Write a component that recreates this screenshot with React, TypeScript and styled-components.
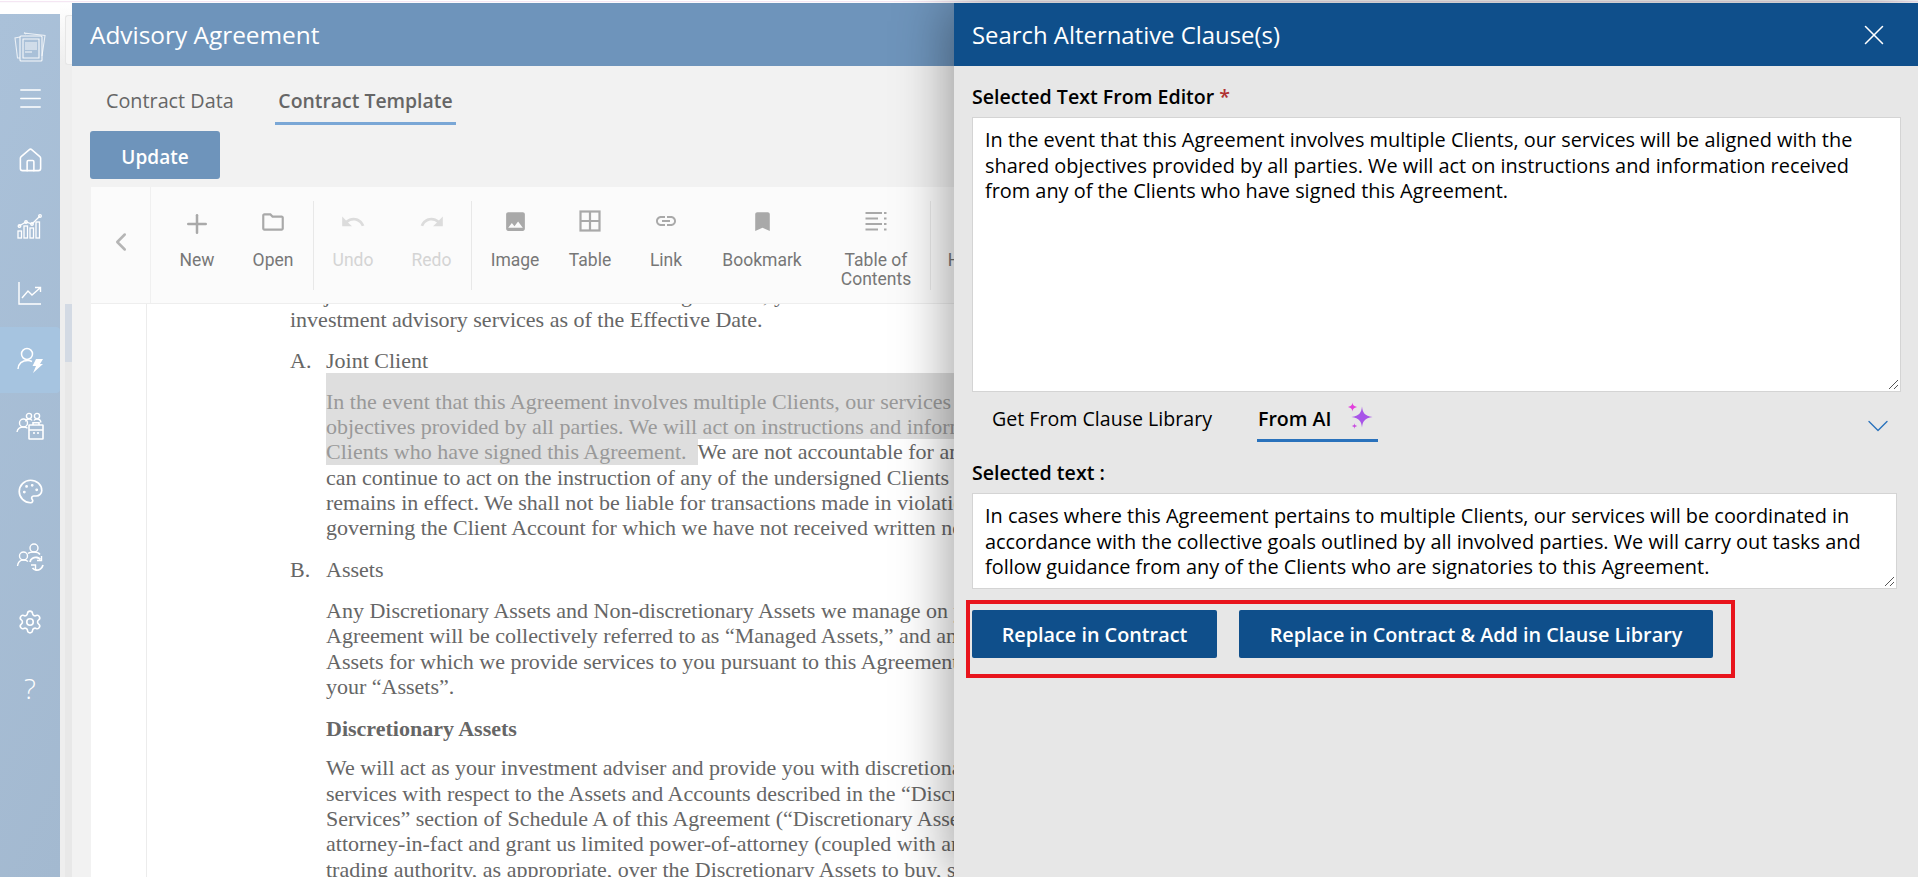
import React from 'react';
import styled, { createGlobalStyle } from 'styled-components';
import { X, ChevronDown, ChevronLeft, Plus, Home, Settings, Palette, Menu } from 'lucide-react';

const GlobalStyle = createGlobalStyle`
  html, body {
    margin: 0;
    padding: 0;
    height: 100%;
    overflow: hidden;
    background: #fff;
    font-family: 'Open Sans', sans-serif;
  }
  * { box-sizing: border-box; }
`;

const Page = styled.div`
  width: 1918px;
  height: 877px;
  display: flex;
  flex-direction: column;
  overflow: hidden;
`;

const TopStrip = styled.div`
  height: 3px;
  flex: none;
  background: linear-gradient(#fff 0 1px, #f5e6f3 1px 2px, #fbfafc 2px);
`;

const Shell = styled.div`
  flex: 1;
  display: flex;
  min-height: 0;
`;

const Rail = styled.nav`
  width: 60px;
  flex: none;
  margin-top: 11px;
  display: flex;
  flex-direction: column;
  align-items: stretch;
  background: linear-gradient(115deg, #aac1d9 0%, #a3b9d0 100%);
  color: #fff;
`;

const RailLogo = styled.div`
  height: 38px;
  margin-top: 17px;
  display: flex;
  justify-content: center;
`;

const RailItem = styled.div<{ $active?: boolean; $h?: number }>`
  height: ${(p) => p.$h ?? 65.5}px;
  display: flex;
  align-items: center;
  justify-content: center;
  border-radius: 0 4px 4px 0;
  background: ${(p) => (p.$active ? '#a6c4e0' : 'transparent')};
  svg { display: block; }
`;

const RailQuestion = styled.span`
  font-size: 28px;
  line-height: 1;
  font-weight: 300;
`;

const Gutter = styled.div`
  width: 12px;
  flex: none;
  padding-top: 12px;
  padding-left: 5px;
  background: linear-gradient(#ffffff 0, #eeeeee 60px);
`;

const GutterCard = styled.div`
  width: 7px;
  height: 50px;
  border: 1px solid #e6e6e6;
  border-right: none;
  border-radius: 3px 0 0 3px;
  background: #f6f6f6;
`;

const GutterThumb = styled.div`
  width: 7px;
  height: 58px;
  margin-top: 239px;
  background: #d3dae4;
`;

const GutterTrack = styled.div`
  width: 7px;
  height: 520px;
  background: #e8e8e8;
`;

const Main = styled.main`
  width: 882px;
  flex: none;
  display: flex;
  flex-direction: column;
  overflow: hidden;
  background: #f2f2f2;
`;

const MainHeader = styled.header`
  height: 63px;
  flex: none;
  display: flex;
  align-items: center;
  padding-left: 18px;
  background: #6e94bb;
  color: #fff;
  font-size: 24.4px;
`;

const Tabs = styled.div`
  height: 60px;
  flex: none;
  display: flex;
  padding-left: 34px;
  gap: 42px;
`;

const Tab = styled.div<{ $active?: boolean }>`
  height: 59px;
  padding: 21px 0 0;
  width: ${(p) => (p.$active ? '181px' : '127px')};
  text-align: center;
  white-space: nowrap;
  font-size: ${(p) => (p.$active ? '19.4px' : '19.8px')};
  line-height: 27px;
  color: #666;
  font-weight: ${(p) => (p.$active ? 600 : 400)};
  border-bottom: 3px solid ${(p) => (p.$active ? '#7aa7d6' : 'transparent')};
`;

const UpdateRow = styled.div`
  height: 61px;
  flex: none;
  padding: 5px 0 0 18px;
`;

const UpdateButton = styled.button`
  width: 130px;
  height: 48px;
  padding: 3px 0 0;
  border: none;
  border-radius: 3px;
  background: #6e94bb;
  color: #fff;
  font: 600 19px 'Open Sans', sans-serif;
`;

const Editor = styled.div`
  flex: 1;
  min-height: 0;
  margin-left: 19px;
  display: flex;
  flex-direction: column;
  background: #fff;
`;

const Toolbar = styled.div`
  height: 117px;
  flex: none;
  display: flex;
  background: #fbfbfb;
  border-bottom: 1px solid #eeeeee;
  overflow: hidden;
`;

const ToolbarPrev = styled.div`
  width: 60px;
  flex: none;
  display: flex;
  align-items: center;
  justify-content: center;
  padding-bottom: 6px;
  border-right: 1px solid #f0f0f0;
  color: #b5b5b5;
`;

const ToolGroup = styled.div<{ $pad?: number }>`
  display: flex;
  flex: none;
  margin: 14px 0 13px;
  padding-left: ${(p) => p.$pad ?? 0}px;
  border-right: 1px solid #e8e8e8;
`;

const Tool = styled.div<{ $w: number; $off?: boolean }>`
  width: ${(p) => p.$w}px;
  display: flex;
  flex-direction: column;
  align-items: center;
  text-align: center;
  font: 400 17.5px/19px Roboto, sans-serif;
  color: ${(p) => (p.$off ? '#d4d4d4' : '#777')};
`;

const ToolIcon = styled.div<{ $off?: boolean }>`
  height: 50px;
  padding-top: 8px;
  color: ${(p) => (p.$off ? '#dcdcdc' : '#a9a9a9')};
  svg { display: block; }
`;

const Doc = styled.div`
  flex: 1;
  min-height: 0;
  overflow: hidden;
  margin-left: 55px;
  border-left: 1px solid #ececec;
  padding-left: 143px;
  font: 400 22px/25.3px 'Liberation Serif', serif;
  color: #666;
`;

const DocLine = styled.div`
  white-space: nowrap;
`;

const ScrolledLine = styled(DocLine)`
  margin-top: -22px;
`;

const ListHead = styled(DocLine)<{ $gap: number }>`
  display: flex;
  margin-top: ${(p) => p.$gap}px;
`;

const ListMark = styled.span`
  width: 36px;
  flex: none;
`;

const Body = styled.div<{ $gap: number }>`
  margin-left: 36px;
  margin-top: ${(p) => p.$gap}px;
`;

const Marked = styled.span`
  display: inline-block;
  background: #dedede;
  color: #999;
`;

const MarkedFull = styled(DocLine)<{ $top?: number }>`
  background: #dedede;
  color: #999;
  padding-top: ${(p) => p.$top ?? 0}px;
  margin-top: ${(p) => -(p.$top ?? 0)}px;
`;

const Strong = styled(DocLine)`
  font-weight: 700;
`;

const Panel = styled.aside`
  flex: 1;
  position: relative;
  z-index: 2;
  display: flex;
  flex-direction: column;
  background: #e7e7e7;
  box-shadow: -6px 0 50px rgba(0, 0, 0, 0.36);
`;

const PanelHeader = styled.header`
  height: 63px;
  flex: none;
  display: flex;
  align-items: center;
  justify-content: space-between;
  padding: 0 27px 0 18px;
  background: #0f4f8b;
  color: #fff;
  font-size: 23.9px;
`;

const PanelBody = styled.div`
  padding: 19px 17px 0 18px;
`;

const FieldLabel = styled.label<{ $top?: number }>`
  display: block;
  margin-top: ${(p) => p.$top ?? 0}px;
  color: #000;
  font-size: 19.6px;
  font-weight: 600;
  line-height: 24px;
`;

const Required = styled.span`
  color: #b03030;
`;

const TextArea = styled.div<{ $h: number; $w?: number }>`
  position: relative;
  width: ${(p) => (p.$w ? `${p.$w}px` : 'auto')};
  height: ${(p) => p.$h}px;
  margin-top: 8px;
  padding: 9px 12px;
  background: #fff;
  border: 1px solid #d4d4d4;
  color: #000;
  font-size: 19.9px;
  line-height: 25.7px;
  white-space: pre-line;
`;

const ResizeGrip = styled.svg`
  position: absolute;
  right: 1px;
  bottom: 1px;
`;

const SubTabs = styled.div`
  height: 50px;
  display: flex;
  align-items: flex-start;
`;

const SubTab = styled.div<{ $active?: boolean }>`
  height: 50px;
  display: flex;
  align-items: flex-start;
  padding: 13px 0 0 ${(p) => (p.$active ? '1px' : '20px')};
  margin-left: ${(p) => (p.$active ? '45px' : '0')};
  width: ${(p) => (p.$active ? '121px' : 'auto')};
  white-space: nowrap;
  color: #000;
  font-size: 19.6px;
  line-height: 27px;
  font-weight: ${(p) => (p.$active ? 600 : 400)};
  border-bottom: ${(p) => (p.$active ? '3px solid #2a72bc' : 'none')};
`;

const Sparkle = styled.svg`
  flex: none;
  margin: -3px 0 0 16px;
`;

const SubTabChevron = styled.div`
  margin-left: auto;
  margin-top: 16px;
  margin-right: 5px;
  color: #2a72bc;
  svg { display: block; }
`;

const ActionBox = styled.div`
  position: relative;
  display: flex;
  gap: 22px;
  margin-top: 21px;
`;

const Outline = styled.div`
  position: absolute;
  left: -6px;
  top: -10px;
  width: 769px;
  height: 78px;
  border: 4px solid #e8141c;
`;

const ActionButton = styled.button<{ $w: number }>`
  width: ${(p) => p.$w}px;
  height: 48px;
  padding: 0;
  border: none;
  border-radius: 2px;
  background: #0f4f8b;
  color: #fff;
  font: 600 19.8px 'Open Sans', sans-serif;
`;

const Grip = () => (
  <ResizeGrip width="12" height="12" viewBox="0 0 12 12" fill="none" stroke="#555" strokeWidth="1">
    <path d="M2 11 L11 2 M7 11 L11 7" />
  </ResizeGrip>
);

const LogoIcon = () => (
  <svg width="32" height="32" viewBox="0 0 32 32" fill="none" stroke="#fff" strokeWidth="1.1">
    <path d="M6 6 L1 7 L3.5 27 L6 27 M12 3 L10 2 L31 4.5 L28 25" opacity="0.75" />
    <rect x="6" y="5" width="22" height="25" rx="1" opacity="0.9" />
    <path d="M9 8 H25 V27 H9 Z" opacity="0.9" />
    <path d="M11 12h12M11 14h12M11 16h12M11 18h12M11 21h7" strokeWidth="1.4" opacity="0.6" />
  </svg>
);

const BarsIcon = () => (
  <svg width="26" height="26" viewBox="0 0 26 26" fill="none" stroke="#fff" strokeWidth="1.3">
    <path d="M2 13 L9 9 L15 11 L23 3" />
    <circle cx="2.5" cy="13" r="1.3" /><circle cx="9" cy="9" r="1.3" /><circle cx="15" cy="11" r="1.3" /><circle cx="23" cy="3" r="1.3" />
    <rect x="1" y="18" width="3.5" height="7" /><rect x="7" y="13" width="3.5" height="12" />
    <rect x="13" y="15" width="3.5" height="10" /><rect x="19" y="9" width="3.5" height="16" />
  </svg>
);

const ChartIcon = () => (
  <svg width="24" height="24" viewBox="0 0 24 24" fill="none" stroke="#fff" strokeWidth="1.4">
    <path d="M1 1 V23 H23" />
    <path d="M4 17 L10 10 L14 14 L22 7 M17 6.5 H22.5 V11" />
  </svg>
);

const UserBoltIcon = () => (
  <svg width="28" height="28" viewBox="0 0 28 28" fill="none" stroke="#fff" strokeWidth="1.5">
    <circle cx="11" cy="8" r="5.5" />
    <path d="M2 23 C2.5 17 7 14.5 12 14.5 C14 14.5 15 15 16 15.5" />
    <path d="M20 13 H27 L24 18 H27 L17 27 L20 20 H16.5 Z" fill="#fff" stroke="none" />
  </svg>
);

const TeamCaseIcon = () => (
  <svg width="28" height="28" viewBox="0 0 28 28" fill="none" stroke="#fff" strokeWidth="1.4">
    <circle cx="7.5" cy="11" r="4" /><circle cx="13" cy="4" r="2.6" /><circle cx="21" cy="4" r="2.6" />
    <path d="M1 20 C1.5 16.5 4 15 7.5 15 C9 15 10.5 15.5 11.5 16.3 M9.5 9.5 C10 8 11 7 13 7 C14.5 7 15.5 7.6 16 8.5 M18 8.5 C18.6 7.5 19.5 7 21 7 C23 7 24.5 8 25 10.5" />
    <rect x="13" y="13" width="14" height="14" rx="0.5" strokeWidth="1.6" />
    <path d="M13 18 H27 M17 13 V10.8 H23 V13 M18 20 V22 M22 20 V22" strokeWidth="1.6" />
  </svg>
);

const UserSyncIcon = () => (
  <svg width="28" height="28" viewBox="0 0 28 28" fill="none" stroke="#fff" strokeWidth="1.4">
    <circle cx="18" cy="5" r="4" /><circle cx="7.5" cy="13" r="4" />
    <path d="M1.5 23 C2 19 4 17 7.5 17 C9.5 17 11 17.6 12 18.6 M12 10.5 C13 9.5 15 9 18 9 C21 9 23 10 24 11.5" />
    <path d="M14 19 C14.5 15.5 18 14 21 14.5 C22.5 14.8 23.5 15.5 24.5 16.5 M27 22 C26 25.5 23 27.5 20 27 C18.5 26.8 17.5 26.2 16.5 25" strokeWidth="1.8" />
    <path d="M25.5 13 V17.5 H21 M15 22 H19.5 V26" strokeWidth="1.4" />
  </svg>
);

const Mi = ({ d, size = 24 }: { d: string; size?: number }) => (
  <svg width={size} height={size} viewBox="0 0 24 24" fill="currentColor"><path d={d} /></svg>
);

const FOLDER = 'M9.17 6l2 2H20v10H4V6h5.17M10 4H4c-1.1 0-1.99.9-1.99 2L2 18c0 1.1.9 2 2 2h16c1.1 0 2-.9 2-2V8c0-1.1-.9-2-2-2h-8l-2-2z';
const UNDO = 'M12.5 8c-2.65 0-5.05.99-6.9 2.6L2 7v9h9l-3.62-3.62c1.39-1.16 3.16-1.88 5.12-1.88 3.54 0 6.55 2.31 7.6 5.5l2.37-.78C21.08 11.03 17.15 8 12.5 8z';
const REDO = 'M18.4 10.6C16.55 8.99 14.15 8 11.5 8c-4.65 0-8.58 3.03-9.96 7.22L3.9 16c1.05-3.19 4.05-5.5 7.6-5.5 1.95 0 3.73.72 5.12 1.88L13 16h9V7l-3.6 3.6z';
const IMAGE = 'M21 19V5c0-1.1-.9-2-2-2H5c-1.1 0-2 .9-2 2v14c0 1.1.9 2 2 2h14c1.1 0 2-.9 2-2zM8.5 13.5l2.5 3.01L14.5 12l4.5 6H5l3.5-4.5z';
const LINK = 'M3.9 12c0-1.71 1.39-3.1 3.1-3.1h4V7H7c-2.76 0-5 2.24-5 5s2.24 5 5 5h4v-1.9H7c-1.71 0-3.1-1.39-3.1-3.1zM8 13h8v-2H8v2zm9-6h-4v1.9h4c1.71 0 3.1 1.39 3.1 3.1s-1.39 3.1-3.1 3.1h-4V17h4c2.76 0 5-2.24 5-5s-2.24-5-5-5z';
const BOOKMARK = 'M17 3H7c-1.1 0-1.99.9-1.99 2L5 21l7-3 7 3V5c0-1.1-.9-2-2-2z';

const TableIcon = () => (
  <svg width="24" height="24" viewBox="0 0 24 24" fill="none" stroke="currentColor" strokeWidth="2.2">
    <rect x="2.5" y="2.5" width="19" height="19" />
    <path d="M12 2.5 V21.5 M2.5 12 H21.5" />
  </svg>
);

const TocIcon = () => (
  <svg width="24" height="24" viewBox="0 0 24 24" fill="none" stroke="currentColor" strokeWidth="2">
    <path d="M1.5 4 H18 M1.5 9.5 H14 M1.5 15 H18 M1.5 20.5 H14 M20 4 H22.5 M20 9.5 H22.5 M20 15 H22.5 M20 20.5 H22.5" />
  </svg>
);

const SparkleIcon = () => (
  <Sparkle width="26" height="28" viewBox="0 0 26 28">
    <path d="M14 4.5 C14.8 11 16.5 13.5 24.5 15 C16.5 16.5 14.8 19 14 25.5 C13.2 19 11.5 16.5 3.5 15 C11.5 13.5 13.2 11 14 4.5 Z" fill="#a855e8" />
    <path d="M4.5 0.5 C4.8 3 5.5 4 9 5 C5.5 6 4.8 7 4.5 9.5 C4.2 7 3.5 6 0 5 C3.5 4 4.2 3 4.5 0.5 Z" fill="#e23fdc" />
    <path d="M6.5 21 C6.7 22.8 7 23.4 9.3 24 C7 24.6 6.7 25.2 6.5 27 C6.3 25.2 6 24.6 3.7 24 C6 23.4 6.3 22.8 6.5 21 Z" fill="#c84de0" />
  </Sparkle>
);

const sourceText = `In the event that this Agreement involves multiple Clients, our services will be aligned with the
shared objectives provided by all parties. We will act on instructions and information received
from any of the Clients who have signed this Agreement.`;

const aiText = `In cases where this Agreement pertains to multiple Clients, our services will be coordinated in
accordance with the collective goals outlined by all involved parties. We will carry out tasks and
follow guidance from any of the Clients who are signatories to this Agreement.`;

export default function App() {
  return (
    <Page>
      <GlobalStyle />
      <TopStrip />
      <Shell>
        <Rail>
          <RailLogo><LogoIcon /></RailLogo>
          <RailItem $h={58}><Menu size={29} strokeWidth={1.3} /></RailItem>
          <RailItem $h={66}><Home size={27} strokeWidth={1.4} /></RailItem>
          <RailItem $h={66}><BarsIcon /></RailItem>
          <RailItem $h={68}><ChartIcon /></RailItem>
          <RailItem $h={66} $active><UserBoltIcon /></RailItem>
          <RailItem><TeamCaseIcon /></RailItem>
          <RailItem><Palette size={27} strokeWidth={1.5} /></RailItem>
          <RailItem><UserSyncIcon /></RailItem>
          <RailItem><Settings size={26} strokeWidth={1.5} /></RailItem>
          <RailItem><RailQuestion>?</RailQuestion></RailItem>
        </Rail>
        <Gutter>
          <GutterCard />
          <GutterThumb />
          <GutterTrack />
        </Gutter>
        <Main>
          <MainHeader>Advisory Agreement</MainHeader>
          <Tabs>
            <Tab>Contract Data</Tab>
            <Tab $active>Contract Template</Tab>
          </Tabs>
          <UpdateRow><UpdateButton>Update</UpdateButton></UpdateRow>
          <Editor>
            <Toolbar>
              <ToolbarPrev><ChevronLeft size={30} strokeWidth={2} /></ToolbarPrev>
              <ToolGroup $pad={10}>
                <Tool $w={72}><ToolIcon><Plus size={30} strokeWidth={2} /></ToolIcon>New</Tool>
                <Tool $w={80}><ToolIcon><Mi d={FOLDER} size={26} /></ToolIcon>Open</Tool>
              </ToolGroup>
              <ToolGroup>
                <Tool $w={78} $off><ToolIcon $off><Mi d={UNDO} size={26} /></ToolIcon>Undo</Tool>
                <Tool $w={79} $off><ToolIcon $off><Mi d={REDO} size={26} /></ToolIcon>Redo</Tool>
              </ToolGroup>
              <ToolGroup $pad={8}>
                <Tool $w={70}><ToolIcon><Mi d={IMAGE} size={25} /></ToolIcon>Image</Tool>
                <Tool $w={80}><ToolIcon><TableIcon /></ToolIcon>Table</Tool>
                <Tool $w={72}><ToolIcon><Mi d={LINK} /></ToolIcon>Link</Tool>
                <Tool $w={120}><ToolIcon><Mi d={BOOKMARK} size={25} /></ToolIcon>Bookmark</Tool>
                <Tool $w={108}><ToolIcon><TocIcon /></ToolIcon>Table of Contents</Tool>
              </ToolGroup>
              <ToolGroup $pad={15}>
                <Tool $w={60}><ToolIcon />Header</Tool>
              </ToolGroup>
            </Toolbar>
            <Doc>
              <ScrolledLine>Subject to the terms and conditions of this Agreement, you retain us for</ScrolledLine>
              <DocLine>investment advisory services as of the Effective Date.</DocLine>
              <ListHead $gap={15}><ListMark>A.</ListMark>Joint Client</ListHead>
              <Body $gap={16}>
                <MarkedFull $top={16}>In the event that this Agreement involves multiple Clients, our services will be aligned with the shared</MarkedFull>
                <MarkedFull>objectives provided by all parties. We will act on instructions and information received from any of the</MarkedFull>
                <DocLine><Marked>Clients who have signed this Agreement.&nbsp;&nbsp;</Marked>We are not accountable for any conflicts among you and</DocLine>
                <DocLine>can continue to act on the instruction of any of the undersigned Clients while this Agreement</DocLine>
                <DocLine>remains in effect. We shall not be liable for transactions made in violation of any agreement</DocLine>
                <DocLine>governing the Client Account for which we have not received written notice.</DocLine>
              </Body>
              <ListHead $gap={16}><ListMark>B.</ListMark>Assets</ListHead>
              <Body $gap={16}>
                <DocLine>Any Discretionary Assets and Non-discretionary Assets we manage on your behalf under this</DocLine>
                <DocLine>Agreement will be collectively referred to as “Managed Assets,” and any other</DocLine>
                <DocLine>Assets for which we provide services to you pursuant to this Agreement are collectively</DocLine>
                <DocLine>your “Assets”.</DocLine>
              </Body>
              <Body $gap={17}><Strong>Discretionary Assets</Strong></Body>
              <Body $gap={14}>
                <DocLine>We will act as your investment adviser and provide you with discretionary investment advisory</DocLine>
                <DocLine>services with respect to the Assets and Accounts described in the “Discretionary Investment</DocLine>
                <DocLine>Services” section of Schedule A of this Agreement (“Discretionary Assets”). You appoint us as your</DocLine>
                <DocLine>attorney-in-fact and grant us limited power-of-attorney (coupled with an interest) with full</DocLine>
                <DocLine>trading authority, as appropriate, over the Discretionary Assets to buy, sell and trade</DocLine>
              </Body>
            </Doc>
          </Editor>
        </Main>
        <Panel>
          <PanelHeader>
            Search Alternative Clause(s)
            <X size={34} strokeWidth={1.1} />
          </PanelHeader>
          <PanelBody>
            <FieldLabel>Selected Text From Editor <Required>*</Required></FieldLabel>
            <TextArea $h={275}>{sourceText}<Grip /></TextArea>
            <SubTabs>
              <SubTab>Get From Clause Library</SubTab>
              <SubTab $active>From AI<SparkleIcon /></SubTab>
              <SubTabChevron><ChevronDown size={36} strokeWidth={0.9} /></SubTabChevron>
            </SubTabs>
            <FieldLabel $top={19}>Selected text :</FieldLabel>
            <TextArea $h={96} $w={925}>{aiText}<Grip /></TextArea>
            <ActionBox>
              <Outline />
              <ActionButton $w={245}>Replace in Contract</ActionButton>
              <ActionButton $w={474}>Replace in Contract &amp; Add in Clause Library</ActionButton>
            </ActionBox>
          </PanelBody>
        </Panel>
      </Shell>
    </Page>
  );
}
